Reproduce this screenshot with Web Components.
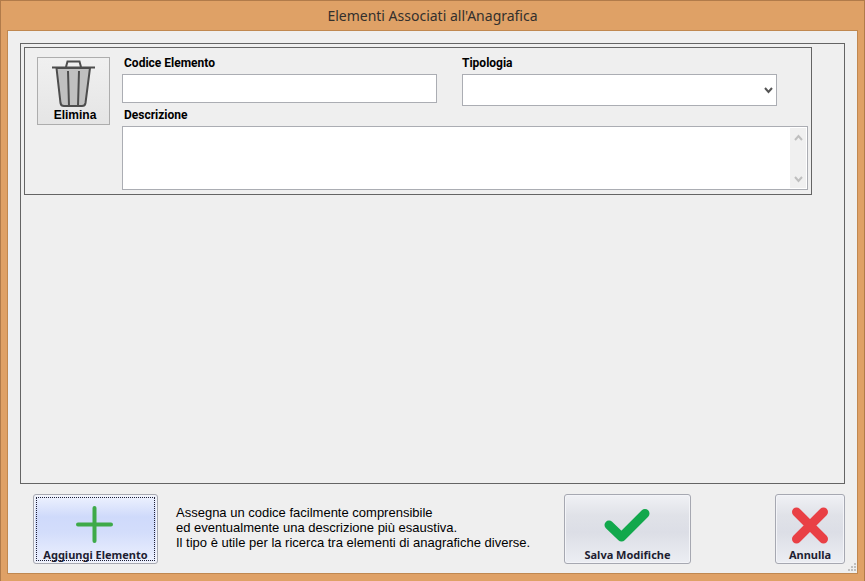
<!DOCTYPE html>
<html lang="it">
<head>
<meta charset="utf-8">
<title>Elementi Associati all'Anagrafica</title>
<style>
    html, body {
        height: 100%;
        margin: 0;
    }
    body {
        background: #dfa166;
        font-family: "Liberation Sans", Arial, sans-serif;
    }
</style>
</head>
<body>
<app-window heading="Elementi Associati all'Anagrafica">
    <element-list>
        <element-record></element-record>
    </element-list>
    <action-bar>
        <action-button label="Aggiungi Elemento" wide="125" active>
            <svg width="40" height="38" viewBox="0 0 40 38"><path d="M18.500 2v33M2 18.500h33" stroke="#3eaa49" stroke-width="4" stroke-linecap="round"/></svg>
        </action-button>
        <p>Assegna un codice facilmente comprensibile<br>ed eventualmente una descrizione più esaustiva.<br>Il tipo è utile per la ricerca tra elementi di anagrafiche diverse.</p>
        <action-button slot="end" label="Salva Modifiche" wide="127">
            <svg width="48" height="38" viewBox="0 0 48 38"><path d="M5 19l12.500 12L41 7.500" fill="none" stroke="#12a84c" stroke-width="9" stroke-linecap="round" stroke-linejoin="round"/></svg>
        </action-button>
        <action-button slot="end" label="Annulla" wide="70">
            <svg width="38" height="38" viewBox="0 0 38 38"><path d="M5.500 6l27 27M32.500 6l-27 27" stroke="#e94045" stroke-width="9" stroke-linecap="round"/></svg>
        </action-button>
    </action-bar>
</app-window>

<script>
class AppWindow extends HTMLElement {
    constructor() {
        super();
        this.attachShadow({ mode: 'open' });
    }

    connectedCallback() {
        this.shadowRoot.innerHTML = `
            <style>
            :host {
                display: flex;
                flex-direction: column;
                box-sizing: border-box;
                min-height: 100%;
                padding: 0 6px 7px;
                border: 1px solid #b17b4a;
                border-bottom: none;
                background: #dfa166;
            }
            h1 {
                margin: 0;
                font: 14px/29px "Noto Sans", "Open Sans", sans-serif;
                text-align: center;
                color: #33302d;
            }
            main {
                position: relative;
                flex: 1;
                display: flex;
                flex-direction: column;
                gap: 10px;
                padding: 12px 12px 9px;
                border: 1px solid #c08850;
                background: #efefef;
            }
            .grip {
                position: absolute;
                right: 1px;
                bottom: 2px;
                fill: #bfbfbf;
            }
            </style>
            <h1>${this.getAttribute('heading')}</h1>
            <main>
                <slot></slot>
                <svg class="grip" width="8" height="8"><path d="M6 0h2v2h-2zM3 3h2v2h-2zM6 3h2v2h-2zM0 6h2v2h-2zM3 6h2v2h-2zM6 6h2v2h-2z"/></svg>
            </main>
        `;
    }
}

class ElementList extends HTMLElement {
    constructor() {
        super();
        this.attachShadow({ mode: 'open' });
    }

    connectedCallback() {
        this.shadowRoot.innerHTML = `
            <style>
            :host {
                display: block;
                flex: 1;
                padding: 3px 32px 3px 3px;
                border: 1px solid #646464;
            }
            </style>
            <slot></slot>
        `;
    }
}

class ElementRecord extends HTMLElement {
    constructor() {
        super();
        this.attachShadow({ mode: 'open' });
    }

    connectedCallback() {
        this.shadowRoot.innerHTML = `
            <style>
            :host {
                display: flex;
                align-items: flex-start;
                gap: 12px;
                padding: 9px 3px 4px 12px;
                border: 1px solid #646464;
                color: #000;
            }
            .delete {
                display: flex;
                flex-direction: column;
                align-items: center;
                box-sizing: border-box;
                width: 73px;
                height: 68px;
                padding: 2px 0 0;
                border: 1px solid #adadad;
                background: linear-gradient(#f0f0f0, #e5e5e5);
                font: bold 12px/12px "Liberation Sans", Arial, sans-serif;
                color: #000;
            }
            .delete span {
                padding-left: 3px;
            }
            .fields {
                flex: 1;
                min-width: 0;
            }
            .row {
                display: grid;
                grid-template-columns: 1fr 1fr;
                gap: 25px;
                padding-right: 31px;
            }
            label {
                display: block;
                height: 17px;
                padding-left: 2px;
                font: bold 12px/12px Roboto, "Liberation Sans", sans-serif;
            }
            label[for="tipologia"] {
                padding-left: 0;
            }
            input, select, .memo {
                box-sizing: border-box;
                width: 100%;
                margin: 0;
                border: 1px solid #abadb3;
                border-radius: 0;
                background: #fff;
                font: 13px "Liberation Sans", Arial, sans-serif;
            }
            input {
                display: block;
                height: 29px;
                padding: 0 4px;
            }
            .combo {
                display: grid;
                align-items: center;
            }
            .combo > * {
                grid-area: 1 / 1;
            }
            .combo svg {
                justify-self: end;
                margin-right: 4px;
                pointer-events: none;
            }
            select {
                appearance: none;
                height: 32px;
                padding: 0 20px 0 4px;
            }
            .long {
                margin-top: 3px;
            }
            .memo {
                display: flex;
                height: 64px;
                padding: 1px;
            }
            textarea {
                flex: 1;
                padding: 2px 4px;
                border: none;
                outline: none;
                resize: none;
                overflow: hidden;
                background: none;
                font: inherit;
            }
            .scroll {
                display: flex;
                flex-direction: column;
                justify-content: space-between;
                align-items: center;
                width: 16px;
                padding: 6px 0 5px;
                box-sizing: border-box;
                background: #f0f0f0;
            }
            </style>
            <button class="delete" type="button">
                <svg width="46" height="49" viewBox="0 0 46 49" fill="none" stroke="#4d4d4d" stroke-width="2">
                    <path d="M5.500 8l4 35q.5 3 3.500 3h18q3 0 3.500-3L39 8z" fill="#c0c0c0"/>
                    <path d="M1 7.500h43M15 7l1.500-5.500h12L30 7M17 11l1 35M28 11l-1 35"/>
                </svg>
                <span>Elimina</span>
            </button>
            <div class="fields">
                <div class="row">
                    <div>
                        <label for="codice">Codice Elemento</label>
                        <input id="codice" type="text">
                    </div>
                    <div>
                        <label for="tipologia">Tipologia</label>
                        <div class="combo">
                            <select id="tipologia"><option></option></select>
                            <svg width="9" height="7" fill="none" stroke="#555" stroke-width="2"><path d="M1 1l3.500 4L8 1"/></svg>
                        </div>
                    </div>
                </div>
                <div class="long">
                    <label for="descrizione">Descrizione</label>
                    <div class="memo">
                        <textarea id="descrizione"></textarea>
                        <div class="scroll">
                            <svg width="9" height="7" fill="none" stroke="#bfbfbf" stroke-width="2"><path d="M1 6l3.500-4L8 6"/></svg>
                            <svg width="9" height="7" fill="none" stroke="#bfbfbf" stroke-width="2"><path d="M1 1l3.500 4L8 1"/></svg>
                        </div>
                    </div>
                </div>
            </div>
        `;
    }
}

class ActionBar extends HTMLElement {
    constructor() {
        super();
        this.attachShadow({ mode: 'open' });
    }

    connectedCallback() {
        this.shadowRoot.innerHTML = `
            <style>
            :host {
                display: flex;
                justify-content: space-between;
                padding-left: 13px;
            }
            .start, .end {
                display: flex;
            }
            .start {
                gap: 18px;
            }
            .end {
                gap: 84px;
            }
            ::slotted(p) {
                margin: 11px 0 0;
                font-size: 13px;
                line-height: 15px;
                color: #000;
            }
            </style>
            <div class="start"><slot></slot></div>
            <div class="end"><slot name="end"></slot></div>
        `;
    }
}

class ActionButton extends HTMLElement {
    constructor() {
        super();
        this.attachShadow({ mode: 'open' });
    }

    connectedCallback() {
        this.shadowRoot.innerHTML = `
            <style>
            :host {
                display: block;
            }
            button {
                display: flex;
                flex-direction: column;
                align-items: center;
                justify-content: flex-end;
                box-sizing: border-box;
                width: ${this.getAttribute('wide')}px;
                height: 70px;
                padding: 0 0 1px;
                border: 1px solid #a6a8b1;
                border-radius: 3px;
                box-shadow: inset 0 0 0 1px #f3f4f8;
                background: linear-gradient(#f0f1f5, #e0e2e8 30%, #dcdee6 55%, #eceef3);
                font: bold 11px/14px "Noto Sans", "Open Sans", sans-serif;
                color: #1e1e32;
                white-space: nowrap;
            }
            :host([active]) button {
                background: linear-gradient(#eff3fe, #cfdafb 32%, #d3ddfb 55%, #edf1fe);
                outline: 1px dotted #1e1e32;
                outline-offset: -4px;
            }
            .icon {
                display: flex;
                align-items: center;
                height: 46px;
            }
            </style>
            <button type="button"><span class="icon"><slot></slot></span><span>${this.getAttribute('label')}</span></button>
        `;
    }
}

customElements.define('app-window', AppWindow);
customElements.define('element-list', ElementList);
customElements.define('element-record', ElementRecord);
customElements.define('action-bar', ActionBar);
customElements.define('action-button', ActionButton);
</script>
</body>
</html>
